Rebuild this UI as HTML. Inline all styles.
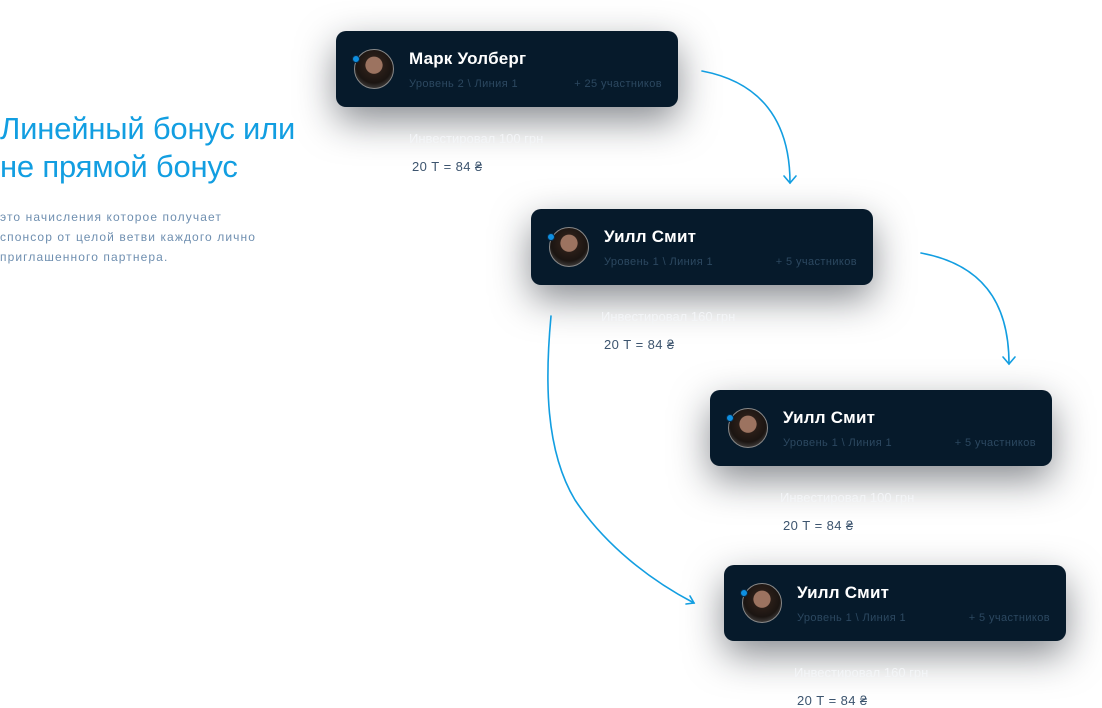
<!DOCTYPE html>
<html><head><meta charset="utf-8"><style>
*{margin:0;padding:0;box-sizing:border-box}
body{width:1102px;height:706px;background:#fff;position:relative;overflow:hidden;font-family:"Liberation Sans","DejaVu Sans",sans-serif}
.h{position:absolute;left:0;top:110px;font-size:31px;line-height:38px;color:#129ee1;font-weight:400;letter-spacing:-0.2px}
.p{position:absolute;left:0;top:207px;font-size:12px;line-height:20px;color:#6f8fb0;width:256px;white-space:nowrap;overflow:hidden;letter-spacing:1.1px}
.card{position:absolute;width:342px;height:76px;background:#061a2b;border-radius:10px;box-shadow:0 14px 38px rgba(20,25,35,0.5)}
.av{position:absolute;left:18px;top:18px;width:40px;height:40px;border-radius:50%;background:radial-gradient(circle at 50% 40%,#9c7360 0 28%,#2a1e18 30%,#1b1512 60%,#6a6a6a 100%);border:1px solid #888}
.dot{position:absolute;left:16px;top:24px;width:8px;height:8px;border-radius:50%;background:#0e8fe0;border:1.5px solid #0a2a45}
.nm{position:absolute;left:73px;top:18px;font-size:17px;font-weight:700;color:#fff;letter-spacing:0.2px}
.sb{position:absolute;left:73px;top:47px;font-size:11px;color:#2c4860;letter-spacing:0.4px}
.rt{position:absolute;right:16px;top:47px;font-size:11px;color:#2c4860;letter-spacing:0.4px}
.inv{position:absolute;font-size:13px;color:#f3f5f7}
.eq{position:absolute;font-size:13px;color:#3c546e;letter-spacing:0.4px}
</style></head><body>
<div class="h">Линейный бонус или<br>не прямой бонус</div>
<div class="p">это начисления которое получает<br>спонсор от целой ветви каждого лично<br>приглашенного партнера.</div>

<div class="card" style="left:336px;top:31px"><div class="av"></div><div class="dot"></div><div class="nm">Марк Уолберг</div><div class="sb">Уровень 2 \ Линия 1</div><div class="rt">+ 25 участников</div></div>
<div class="inv" style="left:409px;top:131px">Инвестировал 100 грн</div>
<div class="eq" style="left:412px;top:159px">20 Т = 84 ₴</div>

<div class="card" style="left:531px;top:209px"><div class="av"></div><div class="dot"></div><div class="nm">Уилл Смит</div><div class="sb">Уровень 1 \ Линия 1</div><div class="rt">+ 5 участников</div></div>
<div class="inv" style="left:601px;top:309px">Инвестировал 160 грн</div>
<div class="eq" style="left:604px;top:337px">20 Т = 84 ₴</div>

<div class="card" style="left:710px;top:390px"><div class="av"></div><div class="dot"></div><div class="nm">Уилл Смит</div><div class="sb">Уровень 1 \ Линия 1</div><div class="rt">+ 5 участников</div></div>
<div class="inv" style="left:780px;top:490px">Инвестировал 100 грн</div>
<div class="eq" style="left:783px;top:518px">20 Т = 84 ₴</div>

<div class="card" style="left:724px;top:565px"><div class="av"></div><div class="dot"></div><div class="nm">Уилл Смит</div><div class="sb">Уровень 1 \ Линия 1</div><div class="rt">+ 5 участников</div></div>
<div class="inv" style="left:794px;top:665px">Инвестировал 160 грн</div>
<div class="eq" style="left:797px;top:693px">20 Т = 84 ₴</div>

<svg width="1102" height="706" style="position:absolute;left:0;top:0" fill="none" stroke="#129ee1" stroke-width="1.6" stroke-linecap="round">
<path d="M702 71 C760 82 790 120 790 183"/><path d="M784 176 L790 183 L796 176"/>
<path d="M921 253 C980 264 1009 300 1009 364"/><path d="M1003 357 L1009 364 L1015 357"/>
<path d="M551 316 C545 380 545 450 575 500 C605 545 650 580 694 603"/><path d="M686 604 L694 603 L690 596"/>
</svg>
</body></html>
